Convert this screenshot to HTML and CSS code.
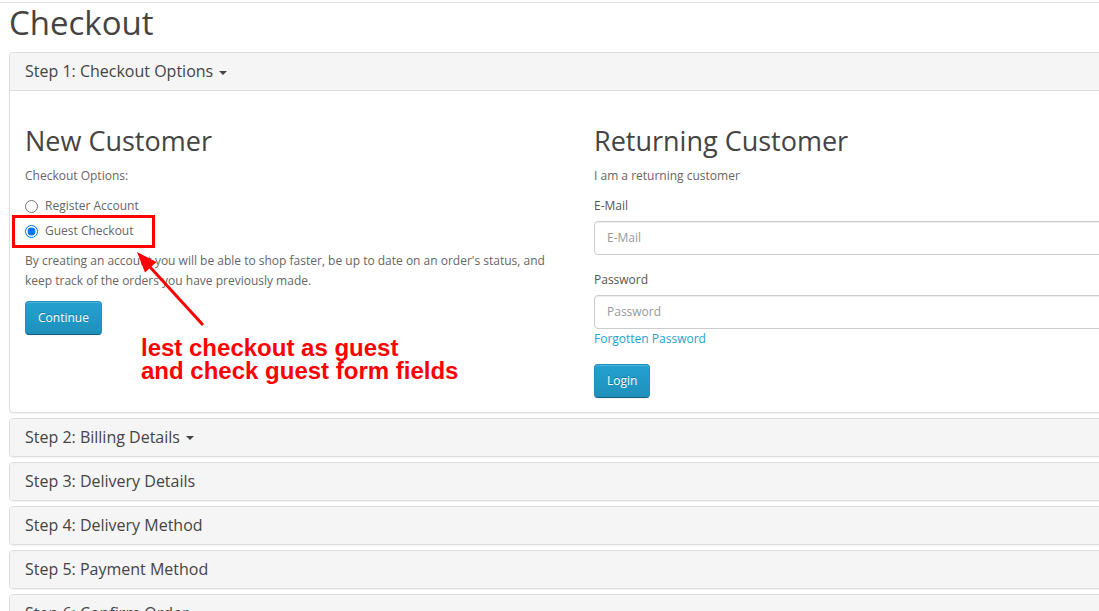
FILE: index.html
```html
<!DOCTYPE html>
<html>
<head>
<meta charset="utf-8">
<title>Checkout</title>
<link rel="stylesheet" href="styles.css">
</head>
<body>
<div class="topbar"></div>
<div class="page">
  <h1 class="page-title">Checkout</h1>
  <div class="panel-group">
    <div class="panel">
      <div class="panel-heading open">
        <h4 class="panel-title">Step 1: Checkout Options <span class="caret"></span></h4>
      </div>
      <div class="panel-body">
        <div class="row">
          <div class="col">
            <h2>New Customer</h2>
            <p>Checkout Options:</p>
            <div class="radio"><label><input type="radio" name="account" value="register">Register Account</label></div>
            <div class="radio radio-next"><label><input type="radio" name="account" value="guest" checked>Guest Checkout</label></div>
            <p>By creating an account you will be able to shop faster, be up to date on an order's status, and keep track of the orders you have previously made.</p>
            <button class="btn">Continue</button>
          </div>
          <div class="col">
            <h2>Returning Customer</h2>
            <p>I am a returning customer</p>
            <div class="form-group">
              <label class="control-label">E-Mail</label>
              <input class="form-control" type="text" placeholder="E-Mail">
            </div>
            <div class="form-group">
              <label class="control-label">Password</label>
              <input class="form-control" type="password" placeholder="Password">
              <a class="link" href="#">Forgotten Password</a>
            </div>
            <button class="btn">Login</button>
          </div>
        </div>
      </div>
    </div>
    <div class="panel"><div class="panel-heading"><h4 class="panel-title">Step 2: Billing Details <span class="caret"></span></h4></div></div>
    <div class="panel"><div class="panel-heading"><h4 class="panel-title">Step 3: Delivery Details</h4></div></div>
    <div class="panel"><div class="panel-heading"><h4 class="panel-title">Step 4: Delivery Method</h4></div></div>
    <div class="panel"><div class="panel-heading"><h4 class="panel-title">Step 5: Payment Method</h4></div></div>
    <div class="panel"><div class="panel-heading"><h4 class="panel-title">Step 6: Confirm Order</h4></div></div>
  </div>
</div>

<div class="annot-box"></div>
<svg class="annot-arrow" width="1099" height="611" viewBox="0 0 1099 611">
  <line x1="203" y1="325" x2="150" y2="267" stroke="#ff0000" stroke-width="3"/>
  <polygon points="137,252 156.5,262 145,272.5" fill="#ff0000"/>
</svg>
<div class="annot-text">lest checkout as guest<br>and check guest form fields</div>
</body>
</html>
```

FILE: styles.css
```css
html, body {
  margin: 0;
  padding: 0;
}
body {
  font-family: "Open Sans", "DejaVu Sans", sans-serif;
  font-size: 12px;
  line-height: 20px;
  color: #666;
  background: #fff;
  width: 1099px;
  height: 611px;
  overflow: hidden;
  position: relative;
}
.topbar {
  height: 2px;
  border-bottom: 1px solid #e2e2e2;
}
.page {
  padding-left: 9px;
  width: 1140px;
}
.page-title {
  margin: 2px 0 11px;
  font-size: 33px;
  line-height: 36px;
  font-weight: normal;
  color: #444;
}
.panel {
  border: 1px solid #ddd;
  border-radius: 4px;
  background: #fff;
  box-shadow: 0 1px 1px rgba(0,0,0,0.05);
  margin-bottom: 5px;
  overflow: hidden;
}
.panel-heading {
  background: #f5f5f5;
  padding: 10px 15px;
}
.panel-heading.open {
  border-bottom: 1px solid #ddd;
}
.panel-title {
  margin: 0;
  font-size: 16px;
  line-height: 17px;
  font-weight: normal;
  color: #444;
}
.caret {
  display: inline-block;
  width: 0;
  height: 0;
  margin-left: 2px;
  vertical-align: middle;
  border-top: 4px solid #444;
  border-left: 4px solid transparent;
  border-right: 4px solid transparent;
}
.panel-body {
  padding: 15px 15px 14px;
}
.row {
  display: flex;
  margin: 0 -15px;
}
.col {
  width: 539px;
  padding: 0 15px;
  flex: 0 0 539px;
}
h2 {
  margin: 20px 0 10px;
  font-size: 27px;
  line-height: 1.1;
  font-weight: normal;
  color: #444;
}
p {
  margin: 0 0 10px;
}
.radio {
  margin: 10px 0;
}
.radio-next {
  margin-top: -5px;
}
.radio label {
  display: flex;
  align-items: flex-start;
  min-height: 20px;
  cursor: pointer;
}
.radio input {
  width: 13px;
  height: 13px;
  margin: 4px 7px 0 0;
}
.btn {
  display: inline-block;
  font-family: "Open Sans", "DejaVu Sans", sans-serif;
  font-size: 12px;
  line-height: 17px;
  padding: 7.5px 12px;
  color: #fff;
  text-shadow: 0 -1px 0 rgba(0,0,0,0.25);
  background-color: #229ac8;
  background-image: linear-gradient(to bottom, #23a1d1, #1f90bb);
  border: 1px solid;
  border-color: #1f90bb #1f90bb #145e7a;
  border-radius: 4px;
  box-shadow: inset 0 1px 0 rgba(255,255,255,0.2), 0 1px 2px rgba(0,0,0,0.05);
  cursor: pointer;
}
.form-group {
  margin-bottom: 15px;
}
.control-label {
  display: inline-block;
  margin-bottom: 5px;
  color: #555;
}
.form-control {
  display: block;
  box-sizing: border-box;
  width: 100%;
  height: 34px;
  padding: 6px 12px;
  font-family: "Open Sans", "DejaVu Sans", sans-serif;
  font-size: 12px;
  color: #555;
  background: #fff;
  border: 1px solid #ccc;
  border-radius: 4px;
  box-shadow: inset 0 1px 1px rgba(0,0,0,0.075);
}
.form-control::placeholder {
  color: #999;
}
.link {
  display: block;
  color: #23a1d1;
  text-decoration: none;
}
.annot-box {
  position: absolute;
  left: 12px;
  top: 215px;
  width: 137px;
  height: 27px;
  border: 3px solid #ff0000;
}
.annot-arrow {
  position: absolute;
  left: 0;
  top: 0;
  pointer-events: none;
}
.annot-text {
  position: absolute;
  left: 141px;
  top: 336px;
  font-family: "Liberation Sans", Arial, sans-serif;
  font-weight: bold;
  font-size: 24px;
  line-height: 23px;
  color: #ff0000;
  white-space: nowrap;
}
```
